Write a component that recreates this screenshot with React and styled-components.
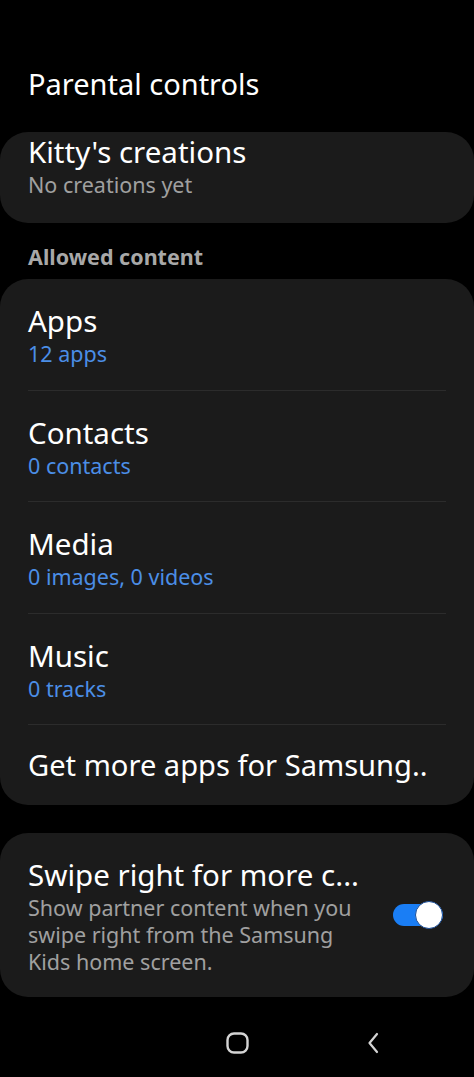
import React from "react";
import styled, { createGlobalStyle } from "styled-components";

const GlobalStyle = createGlobalStyle`
  html, body {
    margin: 0;
    padding: 0;
    background: #000;
  }
  body {
    font-family: "Noto Sans", "Open Sans", sans-serif;
    color: #fff;
  }
`;

const Screen = styled.div`
  width: 474px;
  height: 1077px;
  background: #000;
  display: flex;
  flex-direction: column;
  overflow: hidden;
`;

const Header = styled.h1`
  margin: 0;
  padding: 64px 28px 0;
  height: 68px;
  font-size: 29px;
  font-weight: 400;
  line-height: 40px;
`;

const Card = styled.div`
  background: #1b1b1b;
  border-radius: 28px;
  margin-top: ${(p) => p.top || 0}px;
`;

const Row = styled.div`
  display: flex;
  align-items: ${(p) => (p.top ? "flex-start" : "center")};
  min-height: ${(p) => p.height || 111.5}px;
  margin: 0 28px;
  border-bottom: ${(p) => (p.last ? "none" : "1px solid #2c2c2c")};
  box-sizing: border-box;
`;

const Texts = styled.div`
  flex: 1;
  min-width: 0;
`;

const Title = styled.div`
  font-size: ${(p) => p.size || 29.5}px;
  line-height: 39px;
  white-space: nowrap;
`;

const Sub = styled.div`
  font-size: 21.5px;
  line-height: 27px;
  color: ${(p) => (p.blue ? "#4b8ee6" : "#a0a0a0")};
`;

const Section = styled.div`
  padding: 22px 28px 10px;
  font-size: 21.5px;
  font-weight: 700;
  color: #a8a8a8;
  line-height: 24px;
`;

const Toggle = styled.div`
  position: relative;
  width: 50px;
  height: 22px;
  border-radius: 11px;
  background: #1a7ef5;
  margin: 0 3px 0 16px;
  flex-shrink: 0;

  &::after {
    content: "";
    position: absolute;
    right: 0;
    top: -3px;
    width: 28px;
    height: 28px;
    border-radius: 50%;
    background: #fff;
    border: 1px solid #1b4f9a;
    box-sizing: border-box;
  }
`;

const NavBar = styled.div`
  margin-top: auto;
  height: 68px;
  display: grid;
  grid-template-columns: repeat(3, 136px);
  justify-content: center;
  align-items: center;
  justify-items: center;
`;

const items = [
  { title: "Apps", sub: "12 apps" },
  { title: "Contacts", sub: "0 contacts" },
  { title: "Media", sub: "0 images, 0 videos" },
  { title: "Music", sub: "0 tracks" },
];

export default function App() {
  return (
    <Screen>
      <GlobalStyle />
      <Header>Parental controls</Header>
      <Card>
        <Row last top height={91}>
          <Texts>
            <Title>Kitty's creations</Title>
            <Sub>No creations yet</Sub>
          </Texts>
        </Row>
      </Card>
      <Section>Allowed content</Section>
      <Card>
        {items.map((it) => (
          <Row key={it.title}>
            <Texts>
              <Title>{it.title}</Title>
              <Sub blue>{it.sub}</Sub>
            </Texts>
          </Row>
        ))}
        <Row last height={80}>
          <Texts>
            <Title size={29.1}>Get more apps for Samsung..</Title>
          </Texts>
        </Row>
      </Card>
      <Card top={28}>
        <Row last height={164}>
          <Texts>
            <Title>Swipe right for more c...</Title>
            <Sub>
              Show partner content when you swipe right from the Samsung Kids
              home screen.
            </Sub>
          </Texts>
          <Toggle />
        </Row>
      </Card>
      <NavBar>
        <span />
        <svg width="23" height="22" viewBox="0 0 23 22">
          <rect x="1.5" y="1.5" width="20" height="19" rx="6.5" fill="none" stroke="#d4d4d4" strokeWidth="2.4" />
        </svg>
        <svg width="14" height="22" viewBox="0 0 14 22">
          <path d="M11 2 L3.5 11 L11 20" fill="none" stroke="#d4d4d4" strokeWidth="2.2" strokeLinecap="round" strokeLinejoin="round" />
        </svg>
      </NavBar>
    </Screen>
  );
}
